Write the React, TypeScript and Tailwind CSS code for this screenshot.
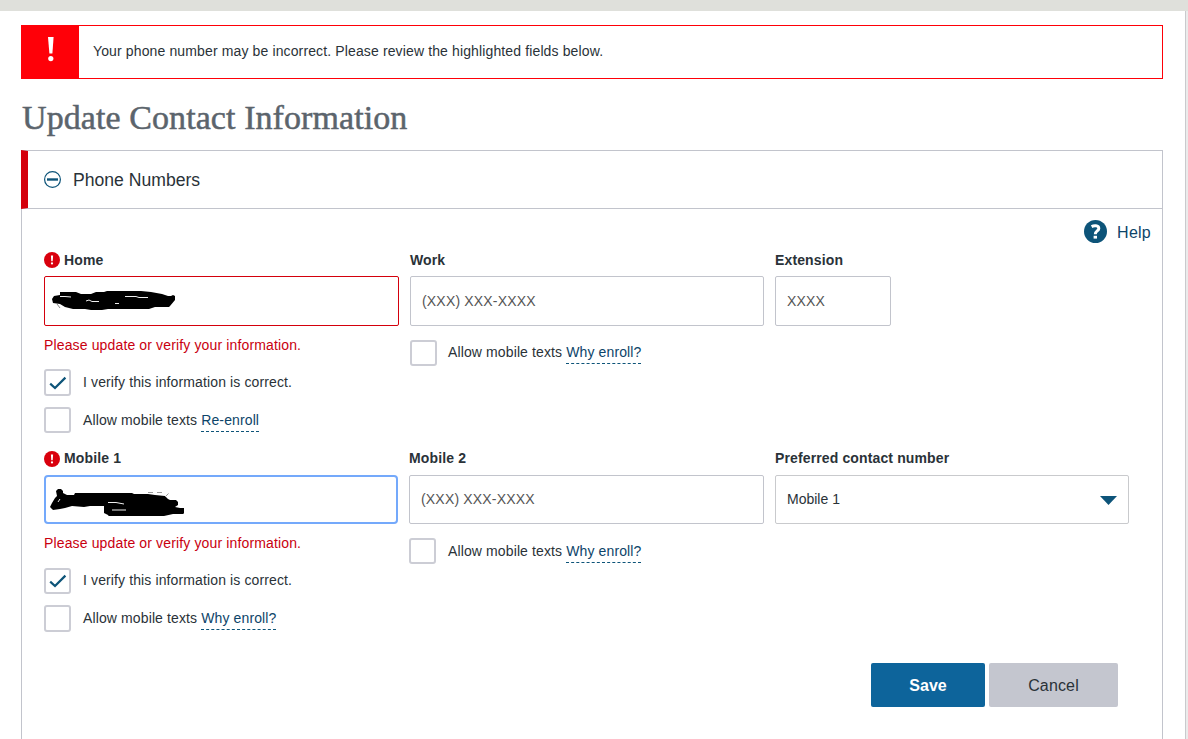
import type { ReactNode } from "react";

function AlertDot() {
  return (
    <svg width="16" height="16" viewBox="0 0 16 16" className="shrink-0">
      <circle cx="8" cy="8" r="8" fill="#d9000d" />
      <path d="M6.9 3.6h2.2l-.4 5.6H7.3z" fill="#fff" />
      <circle cx="8" cy="11.4" r="1.1" fill="#fff" />
    </svg>
  );
}

function Label({ children, alert, raised }: { children: ReactNode; alert?: boolean; raised?: boolean }) {
  return (
    <div className="flex h-8 items-center gap-1 text-[14px] font-bold tracking-[0.13px] whitespace-nowrap">
      {alert && <AlertDot />}
      <span className={raised ? "pb-[2px]" : ""}>{children}</span>
    </div>
  );
}

function ErrorText() {
  return (
    <div className="h-[38px] text-[14px] leading-[38px] tracking-[0.14px] text-[#c9000f]">
      Please update or verify your information.
    </div>
  );
}

function Check({ checked, className, children }: { checked?: boolean; className: string; children: ReactNode }) {
  return (
    <div className={`flex ${className}`}>
      <div className="flex h-full w-[27px] items-center justify-center rounded-[3px] border-2 border-[#cccdd5]">
        {checked && (
          <svg width="18" height="14" viewBox="0 0 18 14">
            <path d="M1.2 7.6 L6 12 L16.4 1.6" fill="none" stroke="#0d5479" strokeWidth="2.2" />
          </svg>
        )}
      </div>
      <div className="ml-3 pt-[3px] text-[14px] leading-5 tracking-[0.12px] whitespace-nowrap">{children}</div>
    </div>
  );
}

function EnrollLink({ children }: { children: ReactNode }) {
  return (
    <a className="inline-block h-[22px] border-b border-dashed border-[#0d5479] leading-5 text-[#0d4469]">{children}</a>
  );
}

export default function App() {
  return (
    <div className="flex h-[739px] w-[1188px] flex-col overflow-hidden bg-white font-['Liberation_Sans',Arial,sans-serif] text-[#2a3238]">
      <div className="h-[11px] shrink-0 bg-[#dfe0db]" />
      <div className="flex flex-1">
        <main className="flex w-[1185px] flex-col pt-[14px] pr-[22px] pl-[21px]">
          <div className="flex h-[54px] shrink-0 border border-[#ff0008]">
            <div className="flex w-[57px] items-start justify-center bg-[#ff0008] pt-[11px]">
              <svg width="8" height="26" viewBox="0 0 8 26" fill="#fff">
                <path d="M1 0h5.6L5.4 16.6H2.4z" />
                <circle cx="3.8" cy="21.6" r="2.6" />
              </svg>
            </div>
            <p className="pl-[14px] text-[14px] leading-[50px] tracking-[0.13px]">
              Your phone number may be incorrect. Please review the highlighted fields below.
            </p>
          </div>
          <h1 className="h-[71px] shrink-0 pl-px font-['Liberation_Serif',serif] text-[34px] leading-[78px] tracking-[0.08px] whitespace-nowrap text-[#5b646c] [-webkit-text-stroke:0.5px_#5b646c]">
            Update Contact Information
          </h1>
          <section className="flex flex-1 flex-col">
            <div className="flex h-[59px] shrink-0 items-center border border-l-[7px] border-[#c2c4cc] border-l-[#d4000c] pl-4">
              <svg width="17" height="17" viewBox="0 0 17 17">
                <circle cx="8.5" cy="8.5" r="7.9" fill="none" stroke="#0d5479" strokeWidth="1.2" />
                <path d="M3 8.5h11" stroke="#0d5479" strokeWidth="2.4" />
              </svg>
              <h2 className="ml-3 pt-[2px] text-[17.6px]">Phone Numbers</h2>
            </div>
            <div className="flex flex-1 flex-col border-x border-[#c2c4cc] pt-[11px] pl-[22px]">
              <div className="flex h-6 items-start justify-end gap-[10px] pr-[11px] text-[16px] text-[#0d4469]">
                <svg width="23" height="23" viewBox="0 0 23 23">
                  <circle cx="11.5" cy="11.5" r="11.5" fill="#0d5479" />
                  <path d="M7.6 6.6 C9.5 5.6 14.8 5 14.8 8.4 C14.8 11 11.3 10.8 11.3 14.2" fill="none" stroke="#fff" strokeWidth="3" />
                  <rect x="9.6" y="15.8" width="3.4" height="2.8" fill="#fff" />
                </svg>
                <a className="pt-px leading-6 tracking-[0.25px]">Help</a>
              </div>
              <div className="grid h-[199px] grid-cols-[355px_354px_354px] gap-x-[11px]">
                <div>
                  <Label alert>Home</Label>
                  <div className="flex h-[50px] items-center rounded-[2px] border border-[#d4000c] pl-[7px]">
                    <svg width="125" height="22" viewBox="0 0 125 22" className="mt-[2px]">
                      <path d="M8 1h16l5 2h10l5-2h8l3-1h34l10 1 11 2 6 2h3l2-1 2 1v4l-5 6-1 1H103l-6 2H56l-6 1H39l-6-1H21l-8-2-5-3-7-1-1-4 2-3 6-1z" />
                      <path d="M8 5.5h5l6 .5M34 10l3-1 3 1.5h7M73 5.5h11l3 1h9M63 12.5h4" stroke="#eee" fill="none" />
                      <path d="M5 13l3 4" stroke="#888" fill="none" />
                    </svg>
                  </div>
                  <ErrorText />
                  <Check checked className="mt-[5px] h-[27px]">I verify this information is correct.</Check>
                  <Check className="mt-[11px] h-[26px]">
                    Allow mobile texts <EnrollLink>Re-enroll</EnrollLink>
                  </Check>
                </div>
                <div>
                  <Label>Work</Label>
                  <div className="h-[50px] rounded-[2px] border border-[#c2c4cc] pl-[11px] text-[14px] leading-[48px] tracking-[0.18px] text-[#555]">
                    (XXX) XXX-XXXX
                  </div>
                  <Check className="mt-[14px] h-[26px] [&>div:last-child]:ml-[11px] [&>div:last-child]:pt-[2px]">
                    Allow mobile texts <EnrollLink>Why enroll?</EnrollLink>
                  </Check>
                </div>
                <div>
                  <Label>Extension</Label>
                  <div className="h-[50px] w-[116px] rounded-[2px] border border-[#c2c4cc] pl-[11px] text-[14px] leading-[48px] tracking-[0.18px] text-[#555]">
                    XXXX
                  </div>
                </div>
              </div>
              <div className="grid h-[220px] grid-cols-[354px_355px_354px] gap-x-[11px]">
                <div>
                  <Label alert raised>Mobile 1</Label>
                  <div className="flex h-[49px] items-center rounded-[4px] border-2 border-[#74a9fb] pl-[4px]">
                    <svg width="134" height="28" viewBox="0 0 134 28" className="mt-[4px]">
                      <path d="M6 3l2-2h3l2 2v2l4 2h7l1-2h57l2 1h14l7 1 10 1 3 3 2 1h6l2 2v3l-3 2 5 1h4l2 2v2l-3 2h-10l-9 2h-13l-7 2H60l-2-3-4-2V18H40l-6 1-12-1-7 2-5 1-7 1-3-3 2-4 3-5 2-2z" />
                      <path d="M8 14l2-3M58 14.5h8l8 1.5M62 22h14" stroke="#eee" fill="none" />
                      <path d="M115 9l4-4M98 4.5h16" stroke="#999" strokeDasharray="5 4" fill="none" />
                    </svg>
                  </div>
                  <ErrorText />
                  <Check checked className="mt-[6px] h-[26px] [&>div:last-child]:pt-[2px]">I verify this information is correct.</Check>
                  <Check className="mt-[11px] h-[27px]">
                    Allow mobile texts <EnrollLink>Why enroll?</EnrollLink>
                  </Check>
                </div>
                <div>
                  <Label raised>Mobile 2</Label>
                  <div className="h-[49px] rounded-[2px] border border-[#c2c4cc] pl-[11px] text-[14px] leading-[46px] tracking-[0.18px] text-[#555]">
                    (XXX) XXX-XXXX
                  </div>
                  <Check className="mt-[14px] h-[26px]">
                    Allow mobile texts <EnrollLink>Why enroll?</EnrollLink>
                  </Check>
                </div>
                <div>
                  <Label raised>Preferred contact number</Label>
                  <div className="flex h-[49px] items-center justify-between rounded-[2px] border border-[#c9cacd] pr-[11px] pl-[11px] text-[14px]">
                    <span>Mobile 1</span>
                    <svg width="17" height="9" viewBox="0 0 17 9" className="mt-px">
                      <path d="M0 0h17L8.5 9z" fill="#0d5479" />
                    </svg>
                  </div>
                </div>
              </div>
              <div className="flex h-11 justify-end gap-1 pr-11 text-[16px]">
                <button className="w-[114px] rounded-[2px] bg-[#0d649b] pt-px font-bold text-white">Save</button>
                <button className="w-[129px] rounded-[2px] bg-[#c4c6cf] pt-px tracking-[0.15px]">Cancel</button>
              </div>
            </div>
          </section>
        </main>
        <div className="w-[3px] border-l border-[#c9cacd] bg-[#ebebeb]" />
      </div>
    </div>
  );
}
